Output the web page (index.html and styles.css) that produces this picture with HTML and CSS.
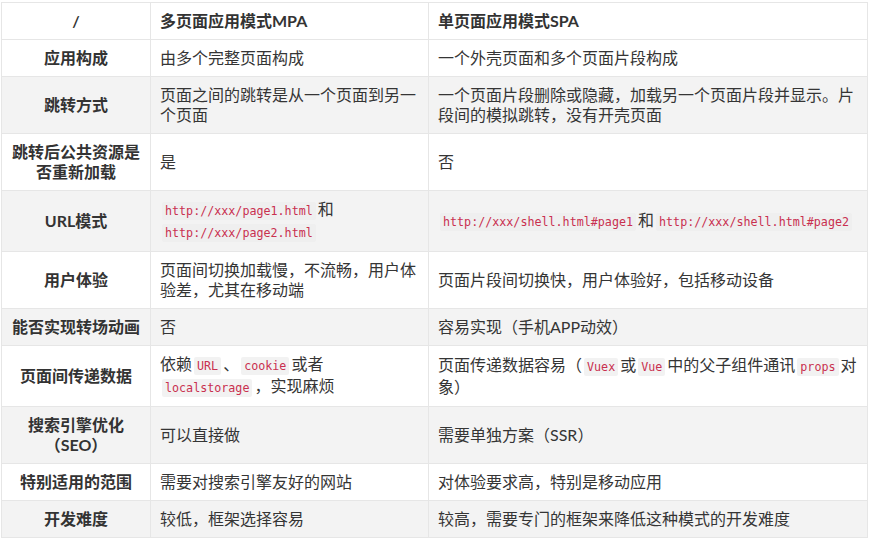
FILE: index.html
```html
<!DOCTYPE html>
<html lang="zh-CN">
<head>
    <meta charset="UTF-8">
    <meta name="viewport" content="width=device-width, initial-scale=1.0">
    <title>MPA 与 SPA 对比</title>
    <link rel="stylesheet" href="styles.css">
</head>
<body>
    <table class="compare">
        <colgroup>
            <col class="col-key">
            <col class="col-mpa">
            <col class="col-spa">
        </colgroup>
        <thead>
            <tr>
                <th>/</th>
                <th>多页面应用模式MPA</th>
                <th>单页面应用模式SPA</th>
            </tr>
        </thead>
        <tbody>
            <tr>
                <td>应用构成</td>
                <td>由多个完整页面构成</td>
                <td>一个外壳页面和多个页面片段构成</td>
            </tr>
            <tr>
                <td>跳转方式</td>
                <td>页面之间的跳转是从一个页面到另一个页面</td>
                <td>一个页面片段删除或隐藏，加载另一个页面片段并显示。片段间的模拟跳转，没有开壳页面</td>
            </tr>
            <tr>
                <td>跳转后公共资源是否重新加载</td>
                <td>是</td>
                <td>否</td>
            </tr>
            <tr>
                <td>URL模式</td>
                <td><code>http://xxx/page1.html</code>和<code>http://xxx/page2.html</code></td>
                <td><code>http://xxx/shell.html#page1</code>和<code>http://xxx/shell.html#page2</code></td>
            </tr>
            <tr>
                <td>用户体验</td>
                <td>页面间切换加载慢，不流畅，用户体验差，尤其在移动端</td>
                <td>页面片段间切换快，用户体验好，包括移动设备</td>
            </tr>
            <tr>
                <td>能否实现转场动画</td>
                <td>否</td>
                <td>容易实现（手机APP动效）</td>
            </tr>
            <tr>
                <td>页面间传递数据</td>
                <td>依赖<code>URL</code>、<code>cookie</code>或者<code>localstorage</code>，实现麻烦</td>
                <td>页面传递数据容易（<code>Vuex</code>或<code>Vue</code>中的父子组件通讯<code>props</code>对象）</td>
            </tr>
            <tr>
                <td>搜索引擎优化（SEO）</td>
                <td>可以直接做</td>
                <td>需要单独方案（SSR）</td>
            </tr>
            <tr>
                <td>特别适用的范围</td>
                <td>需要对搜索引擎友好的网站</td>
                <td>对体验要求高，特别是移动应用</td>
            </tr>
            <tr>
                <td>开发难度</td>
                <td>较低，框架选择容易</td>
                <td>较高，需要专门的框架来降低这种模式的开发难度</td>
            </tr>
        </tbody>
    </table>
</body>
</html>
```

FILE: styles.css
```css
body {
    margin: 0;
    padding: 2px 0 0 1px;
    background: #fff;
    font-family: Lato, "Noto Sans CJK SC", sans-serif;
    font-size: 16px;
    color: #353535;
}

.compare {
    width: 866px;
    border-collapse: collapse;
    table-layout: fixed;
}

.col-key {
    width: 149px;
}

.col-mpa {
    width: 278px;
}

.col-spa {
    width: 439px;
}

.compare th,
.compare td {
    border: 1px solid #e6e6e6;
    padding: 8px 9px;
    line-height: 20px;
    text-align: left;
    vertical-align: middle;
}

.compare th {
    font-weight: bold;
    color: #333;
}

.compare th:first-child,
.compare td:first-child {
    text-align: center;
    font-weight: bold;
    color: #333;
}

.compare tbody tr:nth-child(even) {
    background: #f3f3f3;
}

.compare code {
    font-family: "DejaVu Sans Mono", monospace;
    font-size: 11.7px;
    line-height: 20px;
    color: #c9304f;
    background: #f2f2f2;
    padding: 2px 3px;
    margin: 0 2px;
    border-radius: 2px;
}

.compare tbody tr:nth-child(even) code {
    background: #efefef;
}
```
